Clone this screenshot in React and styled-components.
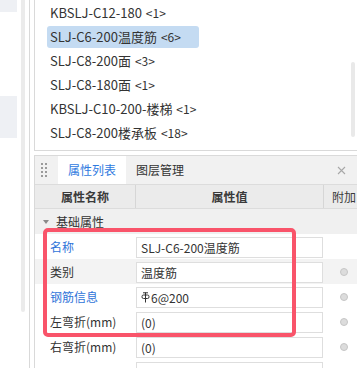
import React from "react";
import styled, { createGlobalStyle } from "styled-components";

const GlobalStyle = createGlobalStyle`
  html, body {
    margin: 0;
    padding: 0;
    background: #ffffff;
    overflow: hidden;
  }
  body {
    font-family: "Noto Sans CJK SC", "Noto Sans", sans-serif;
    color: #333333;
  }
`;

const listItems = [
  { name: "KBSLJ-C12-180", count: 1 },
  { name: "SLJ-C6-200温度筋", count: 6, selected: true },
  { name: "SLJ-C8-200面", count: 3 },
  { name: "SLJ-C8-180面", count: 1 },
  { name: "KBSLJ-C10-200-楼梯", count: 1 },
  { name: "SLJ-C8-200楼承板", count: 18 },
];

const props = [
  { label: "名称", value: "SLJ-C6-200温度筋", link: true },
  { label: "类别", value: "温度筋", radio: true, hover: true },
  { label: "钢筋信息", value: "6@200", link: true, radio: true, rebar: true },
  { label: "左弯折(mm)", value: "(0)", radio: true },
  { label: "右弯折(mm)", value: "(0)", radio: true },
  { label: "", value: "", radio: false },
];

function RebarMark() {
  return (
    <svg width="9" height="11" viewBox="0 0 9 11" style={{ marginRight: 1 }}>
      <path d="M4.5 0.5V10.5" stroke="#333" strokeWidth="1" fill="none" />
      <rect x="1" y="3" width="7" height="3.5" rx="1.5" stroke="#333" strokeWidth="1" fill="none" />
      <path d="M2 0.8H7" stroke="#333" strokeWidth="1" fill="none" />
    </svg>
  );
}

function Grip() {
  const dots = [];
  for (let r = 0; r < 4; r++) {
    for (let c = 0; c < 2; c++) {
      dots.push(<rect key={r + "-" + c} x={c * 4} y={r * 4} width="2" height="2" fill="#9a9a9a" />);
    }
  }
  return (
    <GripBox>
      <svg width="6" height="14" viewBox="0 0 6 14">{dots}</svg>
    </GripBox>
  );
}

export default function App() {
  return (
    <Page>
      <GlobalStyle />
      <LeftPane>
        <LeftBlock $top={0} $height={12} />
        <LeftBlock $top={84} $height={42} />
      </LeftPane>
      <ScrollTrack />
      <Frame>
        <ListPanel>
          {listItems.map((it) => (
            <ListItem key={it.name} $selected={it.selected}>
              {it.name} <Count>&lt;{it.count}&gt;</Count>
            </ListItem>
          ))}
          <ListScroll />
        </ListPanel>
        <PropPanel>
          <TabBar>
            <Grip />
            <Tab $active>属性列表</Tab>
            <Tab>图层管理</Tab>
            <Close>
              <svg width="9" height="9" viewBox="0 0 9 9">
                <path d="M1 1L8 8M8 1L1 8" stroke="#a8a8a8" strokeWidth="1.1" fill="none" />
              </svg>
            </Close>
          </TabBar>
          <HeaderRow>
            <HeaderCell>属性名称</HeaderCell>
            <HeaderCell>属性值</HeaderCell>
            <HeaderCell $last>附加</HeaderCell>
          </HeaderRow>
          <GroupRow>
            <Caret />
            基础属性
          </GroupRow>
          {props.map((p, i) => (
            <PropRow key={i} $hover={p.hover}>
              <LabelCell $link={p.link}>{p.label}</LabelCell>
              <ValueCell>
                <ValueBox>
                  {p.rebar && <RebarMark />}
                  {p.value}
                </ValueBox>
              </ValueCell>
              <ExtraCell>{p.radio && <Radio />}</ExtraCell>
            </PropRow>
          ))}
          <Highlight />
        </PropPanel>
      </Frame>
    </Page>
  );
}

const Page = styled.div`
  display: flex;
  width: 357px;
  height: 368px;
  overflow: hidden;
  background: #ffffff;
`;

const LeftPane = styled.div`
  flex-shrink: 0;
  width: 17px;
  margin-right: 4px;
  display: flex;
  flex-direction: column;
`;

const LeftBlock = styled.div`
  flex-shrink: 0;
  margin-top: ${(p) => p.$top}px;
  height: ${(p) => p.$height}px;
  background: #eef0f4;
`;

const ScrollTrack = styled.div`
  flex-shrink: 0;
  width: 4px;
  height: 312px;
  background: #ebebeb;
  border-radius: 0 0 2px 2px;
`;

const Frame = styled.div`
  flex: 1;
  min-width: 0;
  margin-left: 4px;
  padding-left: 4px;
  border-left: 1px solid #d9d9d9;
  display: flex;
  flex-direction: column;
`;

const ListPanel = styled.div`
  position: relative;
  flex-shrink: 0;
  box-sizing: border-box;
  height: 151px;
  border-left: 1px solid #d9d9d9;
  border-bottom: 1px solid #d9d9d9;
  padding: 2px 0 0 12px;
`;

const ListItem = styled.div`
  box-sizing: border-box;
  width: 152px;
  height: 22px;
  margin-bottom: 2px;
  padding-left: 3px;
  border-radius: 3px;
  font-size: 13px;
  line-height: 22px;
  white-space: nowrap;
  color: #333333;
  background: ${(p) => (p.$selected ? "#c4dbf2" : "transparent")};
`;

const Count = styled.span`
  font-size: 12px;
  margin-left: 1px;
`;

const ListScroll = styled.div`
  position: absolute;
  right: 2px;
  top: 62px;
  width: 4px;
  height: 75px;
  border-radius: 2px;
  background: #e9e9e9;
`;

const PropPanel = styled.div`
  position: relative;
  flex-shrink: 0;
  margin-top: 4px;
  border-top: 1px solid #dadada;
  border-left: 1px solid #d9d9d9;
  font-size: 12px;
`;

const TabBar = styled.div`
  display: flex;
  align-items: stretch;
  height: 28px;
  background: #f1f1f1;
`;

const GripBox = styled.div`
  width: 23px;
  display: flex;
  align-items: center;
  padding-left: 6px;
  box-sizing: border-box;
`;

const Tab = styled.div`
  padding: 0 10px;
  line-height: 28px;
  font-size: 12px;
  color: ${(p) => (p.$active ? "#2f7ae0" : "#333333")};
  background: ${(p) => (p.$active ? "#ffffff" : "transparent")};
`;

const Close = styled.div`
  margin-left: auto;
  width: 20px;
  display: flex;
  align-items: center;
`;

const Grid = styled.div`
  display: grid;
  grid-template-columns: 101px 188px 40px;
  height: 25px;
`;

const HeaderRow = styled(Grid)`
  box-sizing: border-box;
  background: #ebebeb;
  border-top: 1px solid #dcdcdc;
  border-bottom: 1px solid #dcdcdc;
`;

const HeaderCell = styled.div`
  text-align: center;
  line-height: 23px;
  font-weight: ${(p) => (p.$last ? 400 : 700)};
  color: #3a3a3a;
  border-right: ${(p) => (p.$last ? "none" : "1px solid #d6d6d6")};
  white-space: nowrap;
`;

const GroupRow = styled.div`
  display: flex;
  align-items: center;
  height: 25px;
  background: #f0f0f0;
  padding-left: 8px;
  color: #333333;
`;

const Caret = styled.span`
  width: 0;
  height: 0;
  border-left: 3px solid transparent;
  border-right: 3px solid transparent;
  border-top: 4px solid #8a8a8a;
  margin-right: 7px;
`;

const PropRow = styled(Grid)`
  background: ${(p) => (p.$hover ? "#f3f3f3" : "#ffffff")};
`;

const LabelCell = styled.div`
  padding-left: 15px;
  line-height: 25px;
  white-space: nowrap;
  color: ${(p) => (p.$link ? "#2f74d9" : "#333333")};
`;

const ValueCell = styled.div`
  padding: 3px 1px 1px 0;
`;

const ValueBox = styled.div`
  box-sizing: border-box;
  height: 21px;
  border: 1px solid #dedede;
  background: #ffffff;
  padding-left: 4px;
  display: flex;
  align-items: center;
  white-space: nowrap;
  color: #333333;
`;

const ExtraCell = styled.div`
  display: flex;
  align-items: center;
  justify-content: center;
`;

const Radio = styled.span`
  box-sizing: border-box;
  width: 8px;
  height: 8px;
  border-radius: 50%;
  background: #dcdcdc;
  border: 1px solid #c6c6c6;
`;

const Highlight = styled.div`
  position: absolute;
  left: 8px;
  top: 72px;
  width: 253px;
  height: 109px;
  box-sizing: border-box;
  border: 4px solid #f9546a;
  border-radius: 5px;
  pointer-events: none;
`;
